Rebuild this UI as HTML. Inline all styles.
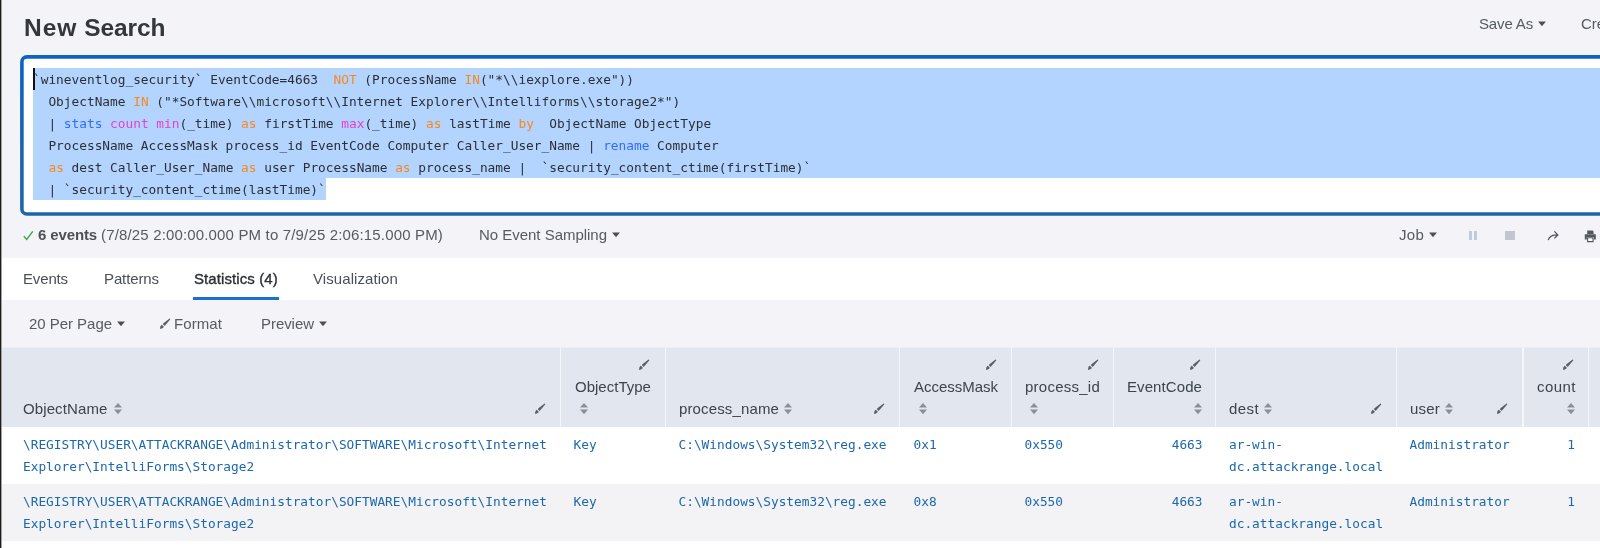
<!DOCTYPE html>
<html lang="en">
<head>
<meta charset="utf-8">
<title>New Search</title>
<style>
*{box-sizing:border-box;margin:0;padding:0}
html,body{width:1600px;height:548px;overflow:hidden;background:#f3f3f8}
body{position:relative;will-change:transform;font-family:"Liberation Sans",sans-serif;color:#5c6066;font-size:15px}
.t{position:absolute;white-space:nowrap;font-size:15px;line-height:18px;color:#565a61}
.t.d{color:#3c444d}
.ic{position:absolute;display:block}
.edge{position:absolute;left:0;top:0;width:2px;height:548px;background:linear-gradient(90deg,#1c1c18 0,#1c1c18 1px,#a3a3a3 1px,#a3a3a3 2px)}
h1{position:absolute;left:23.9px;top:13px;letter-spacing:0.08px;font-size:24.5px;line-height:30px;font-weight:bold;color:#33363b;white-space:nowrap}
.sbox{position:absolute;left:20px;top:56px;width:1620px;height:159px;border:3px solid #1b66b3;border-radius:6px;background:#fff}
.sel{position:absolute;background:#b3d4ff}
.code{position:absolute;left:33px;top:69px;font-family:"DejaVu Sans Mono","Liberation Mono",monospace;font-size:12.8px;line-height:22px;color:#2c2f33;white-space:pre}
.code .o{color:#f8871c}.code .b{color:#2f6cff}.code .p{color:#e540d6}
.cursor{position:absolute;left:33px;top:68px;width:2px;height:22px;background:#111}
.white{position:absolute;left:2px;top:258px;width:1598px;height:42px;background:#fff}
.uline{position:absolute;left:193px;top:297px;width:85.5px;height:3px;background:#1a6fd0}
.th{position:absolute;top:347px;height:80px;background:#e2e6ee;border-top:1px solid #ebeef4}
.thbg{position:absolute;left:2px;top:348px;width:1598px;height:79px;background:#f6f7fa}
.row{position:absolute;left:2px;width:1598px;height:57px}
.m{position:absolute;white-space:pre;font-family:"DejaVu Sans Mono","Liberation Mono",monospace;font-size:12.8px;line-height:22px;color:#1c68ab}
.m.r{text-align:right}
</style>
</head>
<body>
<div class="edge"></div>
<h1><span style="letter-spacing:1.05px">New</span> <span style="letter-spacing:-0.1px">Search</span></h1>

<div class="t " style="left:1479px;top:15px;letter-spacing:-0.143px;">Save As</div>
<svg class="ic" style="left:1537px;top:21px" width="10" height="6" viewBox="0 0 10 6"><path d="M1.1 0.5 L8.9 0.5 L5 5.2 Z" fill="#4c5056"/></svg>
<div class="t " style="left:1581px;top:15px;">Create</div>
<svg class="ic" style="left:18px;top:53px" width="1582" height="166" viewBox="18 53 1582 166"><defs><linearGradient id="bg" gradientUnits="userSpaceOnUse" x1="0" y1="55" x2="0" y2="216"><stop offset="0" stop-color="#0c63c4"/><stop offset="1" stop-color="#1e66a6"/></linearGradient></defs><rect x="21.9" y="56.85" width="1620" height="157.1" rx="5" ry="5" fill="#fff" stroke="url(#bg)" stroke-width="3.6"/></svg>
<div class="sel" style="left:33px;top:68px;width:1567px;height:110px"></div>
<div class="sel" style="left:33px;top:178px;width:293px;height:22px"></div>
<div class="cursor"></div>
<div class="code">`wineventlog_security` EventCode=4663  <span class="o">NOT</span> (ProcessName <span class="o">IN</span>("*\\iexplore.exe"))
  ObjectName <span class="o">IN</span> ("*Software\\microsoft\\Internet Explorer\\Intelliforms\\storage2*")
  | <span class="b">stats</span> <span class="p">count</span> <span class="p">min</span>(_time) <span class="o">as</span> firstTime <span class="p">max</span>(_time) <span class="o">as</span> lastTime <span class="o">by</span>  ObjectName ObjectType
  ProcessName AccessMask process_id EventCode Computer Caller_User_Name | <span class="b">rename</span> Computer
  <span class="o">as</span> dest Caller_User_Name <span class="o">as</span> user ProcessName <span class="o">as</span> process_name |  `security_content_ctime(firstTime)`
  | `security_content_ctime(lastTime)`</div>

<svg class="ic" style="left:23px;top:230px" width="11" height="11" viewBox="0 0 11 11"><path d="M0.8 6.2 L3.7 9.4 L9.8 1.3" fill="none" stroke="#34a84e" stroke-width="1.4"/></svg>
<div class="t " style="left:38px;top:226px;letter-spacing:-0.125px;font-weight:bold;color:#4c5056">6 events</div>
<div class="t " style="left:101px;top:226px;letter-spacing:0.158px;">(7/8/25 2:00:00.000 PM to 7/9/25 2:06:15.000 PM)</div>
<div class="t " style="left:479px;top:226px;letter-spacing:-0.024px;">No Event Sampling</div>
<svg class="ic" style="left:611px;top:232px" width="10" height="6" viewBox="0 0 10 6"><path d="M1.1 0.5 L8.9 0.5 L5 5.2 Z" fill="#4c5056"/></svg>
<div class="t " style="left:1399px;top:226px;letter-spacing:0.267px;">Job</div>
<svg class="ic" style="left:1428px;top:232px" width="10" height="6" viewBox="0 0 10 6"><path d="M1.1 0.5 L8.9 0.5 L5 5.2 Z" fill="#4c5056"/></svg>
<div class="ic" style="left:1469px;top:231px;width:3px;height:9px;background:#c3cbd8"></div><div class="ic" style="left:1474px;top:231px;width:3px;height:9px;background:#c3cbd8"></div>
<div class="ic" style="left:1505px;top:231px;width:10px;height:9px;background:#c3c6ce"></div>
<svg class="ic" style="left:1547px;top:230px" width="13" height="12" viewBox="0 0 13 12"><path d="M1.2 10.2 Q2.6 4.9 10.2 4.9 M7.4 1.4 L10.8 4.9 L7.4 8.4" fill="none" stroke="#4c5056" stroke-width="1.25"/></svg>
<svg class="ic" style="left:1584px;top:230px" width="13" height="13" viewBox="0 0 13 13"><path d="M3.2 0.6 H8.6 L9.6 1.6 V4 H3.2 Z M0.8 4.2 H11.8 V9.4 H9.8 V7 H2.8 V9.4 H0.8 Z" fill="#54585f"/><path d="M3.6 7.8 H9 V11.6 H3.6 Z" fill="#fff" stroke="#54585f" stroke-width="1.1"/></svg>
<div class="white"></div>
<div class="t " style="left:23px;top:270px;letter-spacing:-0.150px;color:#4b4f56">Events</div>
<div class="t " style="left:104px;top:270px;letter-spacing:-0.112px;color:#4b4f56">Patterns</div>
<div class="t " style="left:194px;top:270px;letter-spacing:0.093px;color:#2c2f33;-webkit-text-stroke:0.35px #2c2f33">Statistics (4)</div>
<div class="t " style="left:313px;top:270px;letter-spacing:0.077px;color:#4b4f56">Visualization</div>
<div class="uline"></div>
<div class="t " style="left:29px;top:315px;letter-spacing:-0.036px;">20 Per Page</div>
<svg class="ic" style="left:116px;top:321px" width="10" height="6" viewBox="0 0 10 6"><path d="M1.1 0.5 L8.9 0.5 L5 5.2 Z" fill="#4c5056"/></svg>
<svg class="ic" style="left:159px;top:317px" width="13" height="13" viewBox="0 0 13 13"><g transform="translate(0.8,11.7) rotate(-44)" fill="#5a5e66"><path d="M0 0.4 Q1.6 -1.5 3.4 -1.6 Q4.3 -1.6 4.3 -0.8 L4.3 1.0 Q4.3 1.6 3.4 1.6 Q1.6 1.5 0 0.4 Z"/><path d="M5.3 -0.9 Q5.3 -1.35 6.0 -1.35 L7.6 -1.25 L13.8 -0.65 Q14.3 -0.5 14.3 0 Q14.3 0.5 13.8 0.65 L7.6 1.25 L6.0 1.35 Q5.3 1.35 5.3 0.9 Z"/></g></svg>
<div class="t " style="left:174px;top:315px;letter-spacing:0.083px;">Format</div>
<div class="t " style="left:261px;top:315px;letter-spacing:-0.057px;">Preview</div>
<svg class="ic" style="left:318px;top:321px" width="10" height="6" viewBox="0 0 10 6"><path d="M1.1 0.5 L8.9 0.5 L5 5.2 Z" fill="#4c5056"/></svg>
<div class="thbg"></div>
<div class="th" style="left:2px;width:558px"></div>
<div class="th" style="left:561px;width:104px"></div>
<div class="th" style="left:666px;width:233px"></div>
<div class="th" style="left:900px;width:111px"></div>
<div class="th" style="left:1012px;width:101px"></div>
<div class="th" style="left:1114px;width:101px"></div>
<div class="th" style="left:1216px;width:180px"></div>
<div class="th" style="left:1397px;width:125px"></div>
<div class="th" style="left:1524px;width:64px"></div>
<div class="th" style="left:1589px;width:11px"></div>
<div class="t d" style="left:23px;top:400px;letter-spacing:0.110px;">ObjectName</div>
<svg class="ic" style="left:114px;top:403px" width="8" height="12" viewBox="0 0 8 12"><path d="M4 0 L8 4.6 L0 4.6 Z M0 6.6 L8 6.6 L4 11.2 Z" fill="#8b8f96"/></svg>
<svg class="ic" style="left:534px;top:402px" width="13" height="13" viewBox="0 0 13 13"><g transform="translate(0.8,11.7) rotate(-44)" fill="#5a5e66"><path d="M0 0.4 Q1.6 -1.5 3.4 -1.6 Q4.3 -1.6 4.3 -0.8 L4.3 1.0 Q4.3 1.6 3.4 1.6 Q1.6 1.5 0 0.4 Z"/><path d="M5.3 -0.9 Q5.3 -1.35 6.0 -1.35 L7.6 -1.25 L13.8 -0.65 Q14.3 -0.5 14.3 0 Q14.3 0.5 13.8 0.65 L7.6 1.25 L6.0 1.35 Q5.3 1.35 5.3 0.9 Z"/></g></svg>
<div class="t d" style="left:575px;top:378px;letter-spacing:0.010px;">ObjectType</div>
<svg class="ic" style="left:580px;top:403px" width="8" height="12" viewBox="0 0 8 12"><path d="M4 0 L8 4.6 L0 4.6 Z M0 6.6 L8 6.6 L4 11.2 Z" fill="#8b8f96"/></svg>
<svg class="ic" style="left:638px;top:358px" width="13" height="13" viewBox="0 0 13 13"><g transform="translate(0.8,11.7) rotate(-44)" fill="#5a5e66"><path d="M0 0.4 Q1.6 -1.5 3.4 -1.6 Q4.3 -1.6 4.3 -0.8 L4.3 1.0 Q4.3 1.6 3.4 1.6 Q1.6 1.5 0 0.4 Z"/><path d="M5.3 -0.9 Q5.3 -1.35 6.0 -1.35 L7.6 -1.25 L13.8 -0.65 Q14.3 -0.5 14.3 0 Q14.3 0.5 13.8 0.65 L7.6 1.25 L6.0 1.35 Q5.3 1.35 5.3 0.9 Z"/></g></svg>
<div class="t d" style="left:679px;top:400px;letter-spacing:0.133px;">process_name</div>
<svg class="ic" style="left:784px;top:403px" width="8" height="12" viewBox="0 0 8 12"><path d="M4 0 L8 4.6 L0 4.6 Z M0 6.6 L8 6.6 L4 11.2 Z" fill="#8b8f96"/></svg>
<svg class="ic" style="left:873px;top:402px" width="13" height="13" viewBox="0 0 13 13"><g transform="translate(0.8,11.7) rotate(-44)" fill="#5a5e66"><path d="M0 0.4 Q1.6 -1.5 3.4 -1.6 Q4.3 -1.6 4.3 -0.8 L4.3 1.0 Q4.3 1.6 3.4 1.6 Q1.6 1.5 0 0.4 Z"/><path d="M5.3 -0.9 Q5.3 -1.35 6.0 -1.35 L7.6 -1.25 L13.8 -0.65 Q14.3 -0.5 14.3 0 Q14.3 0.5 13.8 0.65 L7.6 1.25 L6.0 1.35 Q5.3 1.35 5.3 0.9 Z"/></g></svg>
<div class="t d" style="left:914px;top:378px;letter-spacing:-0.020px;">AccessMask</div>
<svg class="ic" style="left:919px;top:403px" width="8" height="12" viewBox="0 0 8 12"><path d="M4 0 L8 4.6 L0 4.6 Z M0 6.6 L8 6.6 L4 11.2 Z" fill="#8b8f96"/></svg>
<svg class="ic" style="left:985px;top:358px" width="13" height="13" viewBox="0 0 13 13"><g transform="translate(0.8,11.7) rotate(-44)" fill="#5a5e66"><path d="M0 0.4 Q1.6 -1.5 3.4 -1.6 Q4.3 -1.6 4.3 -0.8 L4.3 1.0 Q4.3 1.6 3.4 1.6 Q1.6 1.5 0 0.4 Z"/><path d="M5.3 -0.9 Q5.3 -1.35 6.0 -1.35 L7.6 -1.25 L13.8 -0.65 Q14.3 -0.5 14.3 0 Q14.3 0.5 13.8 0.65 L7.6 1.25 L6.0 1.35 Q5.3 1.35 5.3 0.9 Z"/></g></svg>
<div class="t d" style="left:1025px;top:378px;letter-spacing:0.250px;">process_id</div>
<svg class="ic" style="left:1030px;top:403px" width="8" height="12" viewBox="0 0 8 12"><path d="M4 0 L8 4.6 L0 4.6 Z M0 6.6 L8 6.6 L4 11.2 Z" fill="#8b8f96"/></svg>
<svg class="ic" style="left:1087px;top:358px" width="13" height="13" viewBox="0 0 13 13"><g transform="translate(0.8,11.7) rotate(-44)" fill="#5a5e66"><path d="M0 0.4 Q1.6 -1.5 3.4 -1.6 Q4.3 -1.6 4.3 -0.8 L4.3 1.0 Q4.3 1.6 3.4 1.6 Q1.6 1.5 0 0.4 Z"/><path d="M5.3 -0.9 Q5.3 -1.35 6.0 -1.35 L7.6 -1.25 L13.8 -0.65 Q14.3 -0.5 14.3 0 Q14.3 0.5 13.8 0.65 L7.6 1.25 L6.0 1.35 Q5.3 1.35 5.3 0.9 Z"/></g></svg>
<div class="t d" style="left:1127px;top:378px;letter-spacing:0.089px;">EventCode</div>
<svg class="ic" style="left:1194px;top:403px" width="8" height="12" viewBox="0 0 8 12"><path d="M4 0 L8 4.6 L0 4.6 Z M0 6.6 L8 6.6 L4 11.2 Z" fill="#8b8f96"/></svg>
<svg class="ic" style="left:1189px;top:358px" width="13" height="13" viewBox="0 0 13 13"><g transform="translate(0.8,11.7) rotate(-44)" fill="#5a5e66"><path d="M0 0.4 Q1.6 -1.5 3.4 -1.6 Q4.3 -1.6 4.3 -0.8 L4.3 1.0 Q4.3 1.6 3.4 1.6 Q1.6 1.5 0 0.4 Z"/><path d="M5.3 -0.9 Q5.3 -1.35 6.0 -1.35 L7.6 -1.25 L13.8 -0.65 Q14.3 -0.5 14.3 0 Q14.3 0.5 13.8 0.65 L7.6 1.25 L6.0 1.35 Q5.3 1.35 5.3 0.9 Z"/></g></svg>
<div class="t d" style="left:1229px;top:400px;letter-spacing:0.400px;">dest</div>
<svg class="ic" style="left:1264px;top:403px" width="8" height="12" viewBox="0 0 8 12"><path d="M4 0 L8 4.6 L0 4.6 Z M0 6.6 L8 6.6 L4 11.2 Z" fill="#8b8f96"/></svg>
<svg class="ic" style="left:1370px;top:402px" width="13" height="13" viewBox="0 0 13 13"><g transform="translate(0.8,11.7) rotate(-44)" fill="#5a5e66"><path d="M0 0.4 Q1.6 -1.5 3.4 -1.6 Q4.3 -1.6 4.3 -0.8 L4.3 1.0 Q4.3 1.6 3.4 1.6 Q1.6 1.5 0 0.4 Z"/><path d="M5.3 -0.9 Q5.3 -1.35 6.0 -1.35 L7.6 -1.25 L13.8 -0.65 Q14.3 -0.5 14.3 0 Q14.3 0.5 13.8 0.65 L7.6 1.25 L6.0 1.35 Q5.3 1.35 5.3 0.9 Z"/></g></svg>
<div class="t d" style="left:1410px;top:400px;letter-spacing:0.200px;">user</div>
<svg class="ic" style="left:1445px;top:403px" width="8" height="12" viewBox="0 0 8 12"><path d="M4 0 L8 4.6 L0 4.6 Z M0 6.6 L8 6.6 L4 11.2 Z" fill="#8b8f96"/></svg>
<svg class="ic" style="left:1496px;top:402px" width="13" height="13" viewBox="0 0 13 13"><g transform="translate(0.8,11.7) rotate(-44)" fill="#5a5e66"><path d="M0 0.4 Q1.6 -1.5 3.4 -1.6 Q4.3 -1.6 4.3 -0.8 L4.3 1.0 Q4.3 1.6 3.4 1.6 Q1.6 1.5 0 0.4 Z"/><path d="M5.3 -0.9 Q5.3 -1.35 6.0 -1.35 L7.6 -1.25 L13.8 -0.65 Q14.3 -0.5 14.3 0 Q14.3 0.5 13.8 0.65 L7.6 1.25 L6.0 1.35 Q5.3 1.35 5.3 0.9 Z"/></g></svg>
<div class="t d" style="left:1537px;top:378px;letter-spacing:0.460px;">count</div>
<svg class="ic" style="left:1567px;top:403px" width="8" height="12" viewBox="0 0 8 12"><path d="M4 0 L8 4.6 L0 4.6 Z M0 6.6 L8 6.6 L4 11.2 Z" fill="#8b8f96"/></svg>
<svg class="ic" style="left:1562px;top:358px" width="13" height="13" viewBox="0 0 13 13"><g transform="translate(0.8,11.7) rotate(-44)" fill="#5a5e66"><path d="M0 0.4 Q1.6 -1.5 3.4 -1.6 Q4.3 -1.6 4.3 -0.8 L4.3 1.0 Q4.3 1.6 3.4 1.6 Q1.6 1.5 0 0.4 Z"/><path d="M5.3 -0.9 Q5.3 -1.35 6.0 -1.35 L7.6 -1.25 L13.8 -0.65 Q14.3 -0.5 14.3 0 Q14.3 0.5 13.8 0.65 L7.6 1.25 L6.0 1.35 Q5.3 1.35 5.3 0.9 Z"/></g></svg>
<div class="row" style="top:427px;background:#fff"></div>
<div class="m" style="left:23px;top:434px">\REGISTRY\USER\ATTACKRANGE\Administrator\SOFTWARE\Microsoft\Internet
Explorer\IntelliForms\Storage2</div>
<div class="m" style="left:573.5px;top:434px">Key</div>
<div class="m" style="left:678.5px;top:434px">C:\Windows\System32\reg.exe</div>
<div class="m" style="left:913.5px;top:434px">0x1</div>
<div class="m" style="left:1024.5px;top:434px">0x550</div>
<div class="m r" style="left:1140.5px;width:62px;top:434px">4663</div>
<div class="m" style="left:1229px;top:434px">ar-win-
dc.attackrange.local</div>
<div class="m" style="left:1409.5px;top:434px">Administrator</div>
<div class="m r" style="left:1530px;width:45px;top:434px">1</div>
<div class="row" style="top:484px;background:#f3f3f6"></div>
<div class="m" style="left:23px;top:491px">\REGISTRY\USER\ATTACKRANGE\Administrator\SOFTWARE\Microsoft\Internet
Explorer\IntelliForms\Storage2</div>
<div class="m" style="left:573.5px;top:491px">Key</div>
<div class="m" style="left:678.5px;top:491px">C:\Windows\System32\reg.exe</div>
<div class="m" style="left:913.5px;top:491px">0x8</div>
<div class="m" style="left:1024.5px;top:491px">0x550</div>
<div class="m r" style="left:1140.5px;width:62px;top:491px">4663</div>
<div class="m" style="left:1229px;top:491px">ar-win-
dc.attackrange.local</div>
<div class="m" style="left:1409.5px;top:491px">Administrator</div>
<div class="m r" style="left:1530px;width:45px;top:491px">1</div>
<div class="row" style="top:541px;background:#fff;height:7px"></div>
</body>
</html>
